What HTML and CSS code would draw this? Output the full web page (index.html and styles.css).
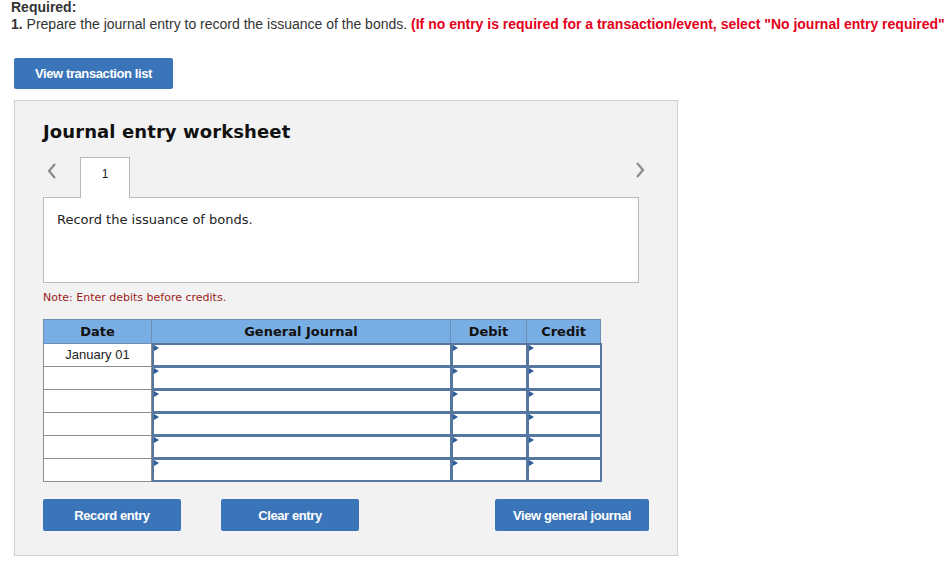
FILE: index.html
```html
<!DOCTYPE html>
<html>
<head>
<meta charset="utf-8">
<link rel="stylesheet" href="styles.css">
</head>
<body>
<div class="req">
  <div class="req-title">Required:</div>
  <div class="req-line"><b>1.</b> Prepare the journal entry to record the issuance of the bonds. <span class="red">(If no entry is required for a transaction/event, select "No journal entry required"</span></div>
</div>
<div class="top-btn-row"><button class="btn btn-top">View transaction list</button></div>
<div class="panel">
  <h2 class="ws-title">Journal entry worksheet</h2>
  <div class="tabs">
    <span class="arrow arrow-left"><svg width="10" height="18" viewBox="0 0 10 18"><path d="M8 2 L2 9 L8 16" fill="none" stroke="#8a8a8a" stroke-width="2.2"/></svg></span>
    <div class="tab">1</div>
    <span class="arrow arrow-right"><svg width="10" height="18" viewBox="0 0 10 18"><path d="M2 2 L8 9 L2 16" fill="none" stroke="#8a8a8a" stroke-width="2.2"/></svg></span>
  </div>
  <div class="desc">Record the issuance of bonds.</div>
  <div class="note">Note: Enter debits before credits.</div>
  <div class="jtable">
    <div class="hd">Date</div><div class="hd">General Journal</div><div class="hd">Debit</div><div class="hd">Credit</div>
    <div class="dt">January 01</div><div class="in"></div><div class="in"></div><div class="in"></div>
    <div class="dt"></div><div class="in"></div><div class="in"></div><div class="in"></div>
    <div class="dt"></div><div class="in"></div><div class="in"></div><div class="in"></div>
    <div class="dt"></div><div class="in"></div><div class="in"></div><div class="in"></div>
    <div class="dt"></div><div class="in"></div><div class="in"></div><div class="in"></div>
    <div class="dt"></div><div class="in"></div><div class="in"></div><div class="in"></div>
  </div>
  <div class="actions">
    <button class="btn btn-rec">Record entry</button>
    <button class="btn btn-clear">Clear entry</button>
    <button class="btn btn-view">View general journal</button>
  </div>
</div>
</body>
</html>
```
FILE: styles.css
```css
html, body { margin: 0; padding: 0; background: #fff; }
body { font-family: "Liberation Sans", Arial, sans-serif; color: #222; }
.req { padding-left: 11px; font-size: 14px; line-height: 17px; color: #333; }
.req-title { font-weight: bold; margin-top: -1px; }
.req-line b { font-weight: bold; }
.red { color: #e3001b; font-weight: bold; }
.top-btn-row { padding: 25px 0 0 14px; }
.btn {
  background: #3a74b9; color: #fff; border: none; border-radius: 2px;
  font-family: "Liberation Sans", Arial, sans-serif; font-weight: bold; font-size: 13px;
  letter-spacing: -0.4px; height: 32px; padding: 0; cursor: pointer;
}
.btn-top { width: 159px; height: 31px; }
.panel {
  margin: 11px 0 0 14px; width: 664px; height: 456px; box-sizing: border-box;
  background: #f2f2f2; border: 1px solid #cfcfcf; padding: 0 0 0 28px;
}
.ws-title {
  font-family: "DejaVu Sans", Verdana, sans-serif; font-weight: bold; font-size: 18px;
  color: #111; margin: 20px 0 0 0; line-height: 22px; letter-spacing: 0.1px;
}
.tabs { display: flex; align-items: center; margin-top: 13px; height: 41px; width: 608px; position: relative; }
.arrow { display: flex; }
.arrow-left { margin-left: 4px; margin-top: -11px; }
.tab {
  margin-left: 23px; width: 50px; height: 41px; box-sizing: border-box;
  background: #fff; border: 1px solid #b9b9b9; border-bottom: none;
  font-size: 12px; text-align: center; line-height: 32px; color: #222;
  position: relative; z-index: 1; margin-bottom: -1px;
}
.arrow-right { margin-left: auto; margin-right: 6px; margin-top: -14px; }
.desc {
  width: 596px; height: 86px; box-sizing: border-box; background: #fff;
  border: 1px solid #b9b9b9; padding: 14px 0 0 13px;
  font-family: "DejaVu Sans", Verdana, sans-serif; font-size: 13px; color: #222;
}
.note {
  font-family: "DejaVu Sans", Verdana, sans-serif; font-size: 11px; color: #9b1c1c;
  margin-top: 8px; line-height: 13px;
}
.jtable {
  margin-top: 15px; display: grid;
  grid-template-columns: 109px 299px 76px 74px;
  grid-template-rows: 25px repeat(6, 23px);
  width: 558px;
}
.hd {
  background: #79aee5; border: 1px solid #6d8fb5; border-left: none;
  font-family: "DejaVu Sans", Verdana, sans-serif; font-weight: bold; font-size: 13px;
  color: #111; text-align: center; line-height: 23px; box-sizing: border-box;
}
.hd:first-child { border-left: 1px solid #6d8fb5; }
.dt {
  background: #fff; border: 1px solid #8c8c8c; border-top: none; box-sizing: border-box;
  font-size: 13px; text-align: center; line-height: 22px; color: #222;
}
.in {
  background: #fff; border: 2px solid #5577a0; margin: -1px -1px 0 0; box-sizing: border-box;
  position: relative; height: 24px;
}
.in::before {
  content: ""; position: absolute; left: 0; top: 0;
  border-left: 5px solid #2e5e9a; border-top: 3px solid transparent; border-bottom: 3px solid transparent;
}
.actions { display: flex; margin-top: 17px; }
.btn-rec { width: 138px; }
.btn-clear { width: 138px; margin-left: 40px; }
.btn-view { width: 154px; margin-left: 136px; }
```
